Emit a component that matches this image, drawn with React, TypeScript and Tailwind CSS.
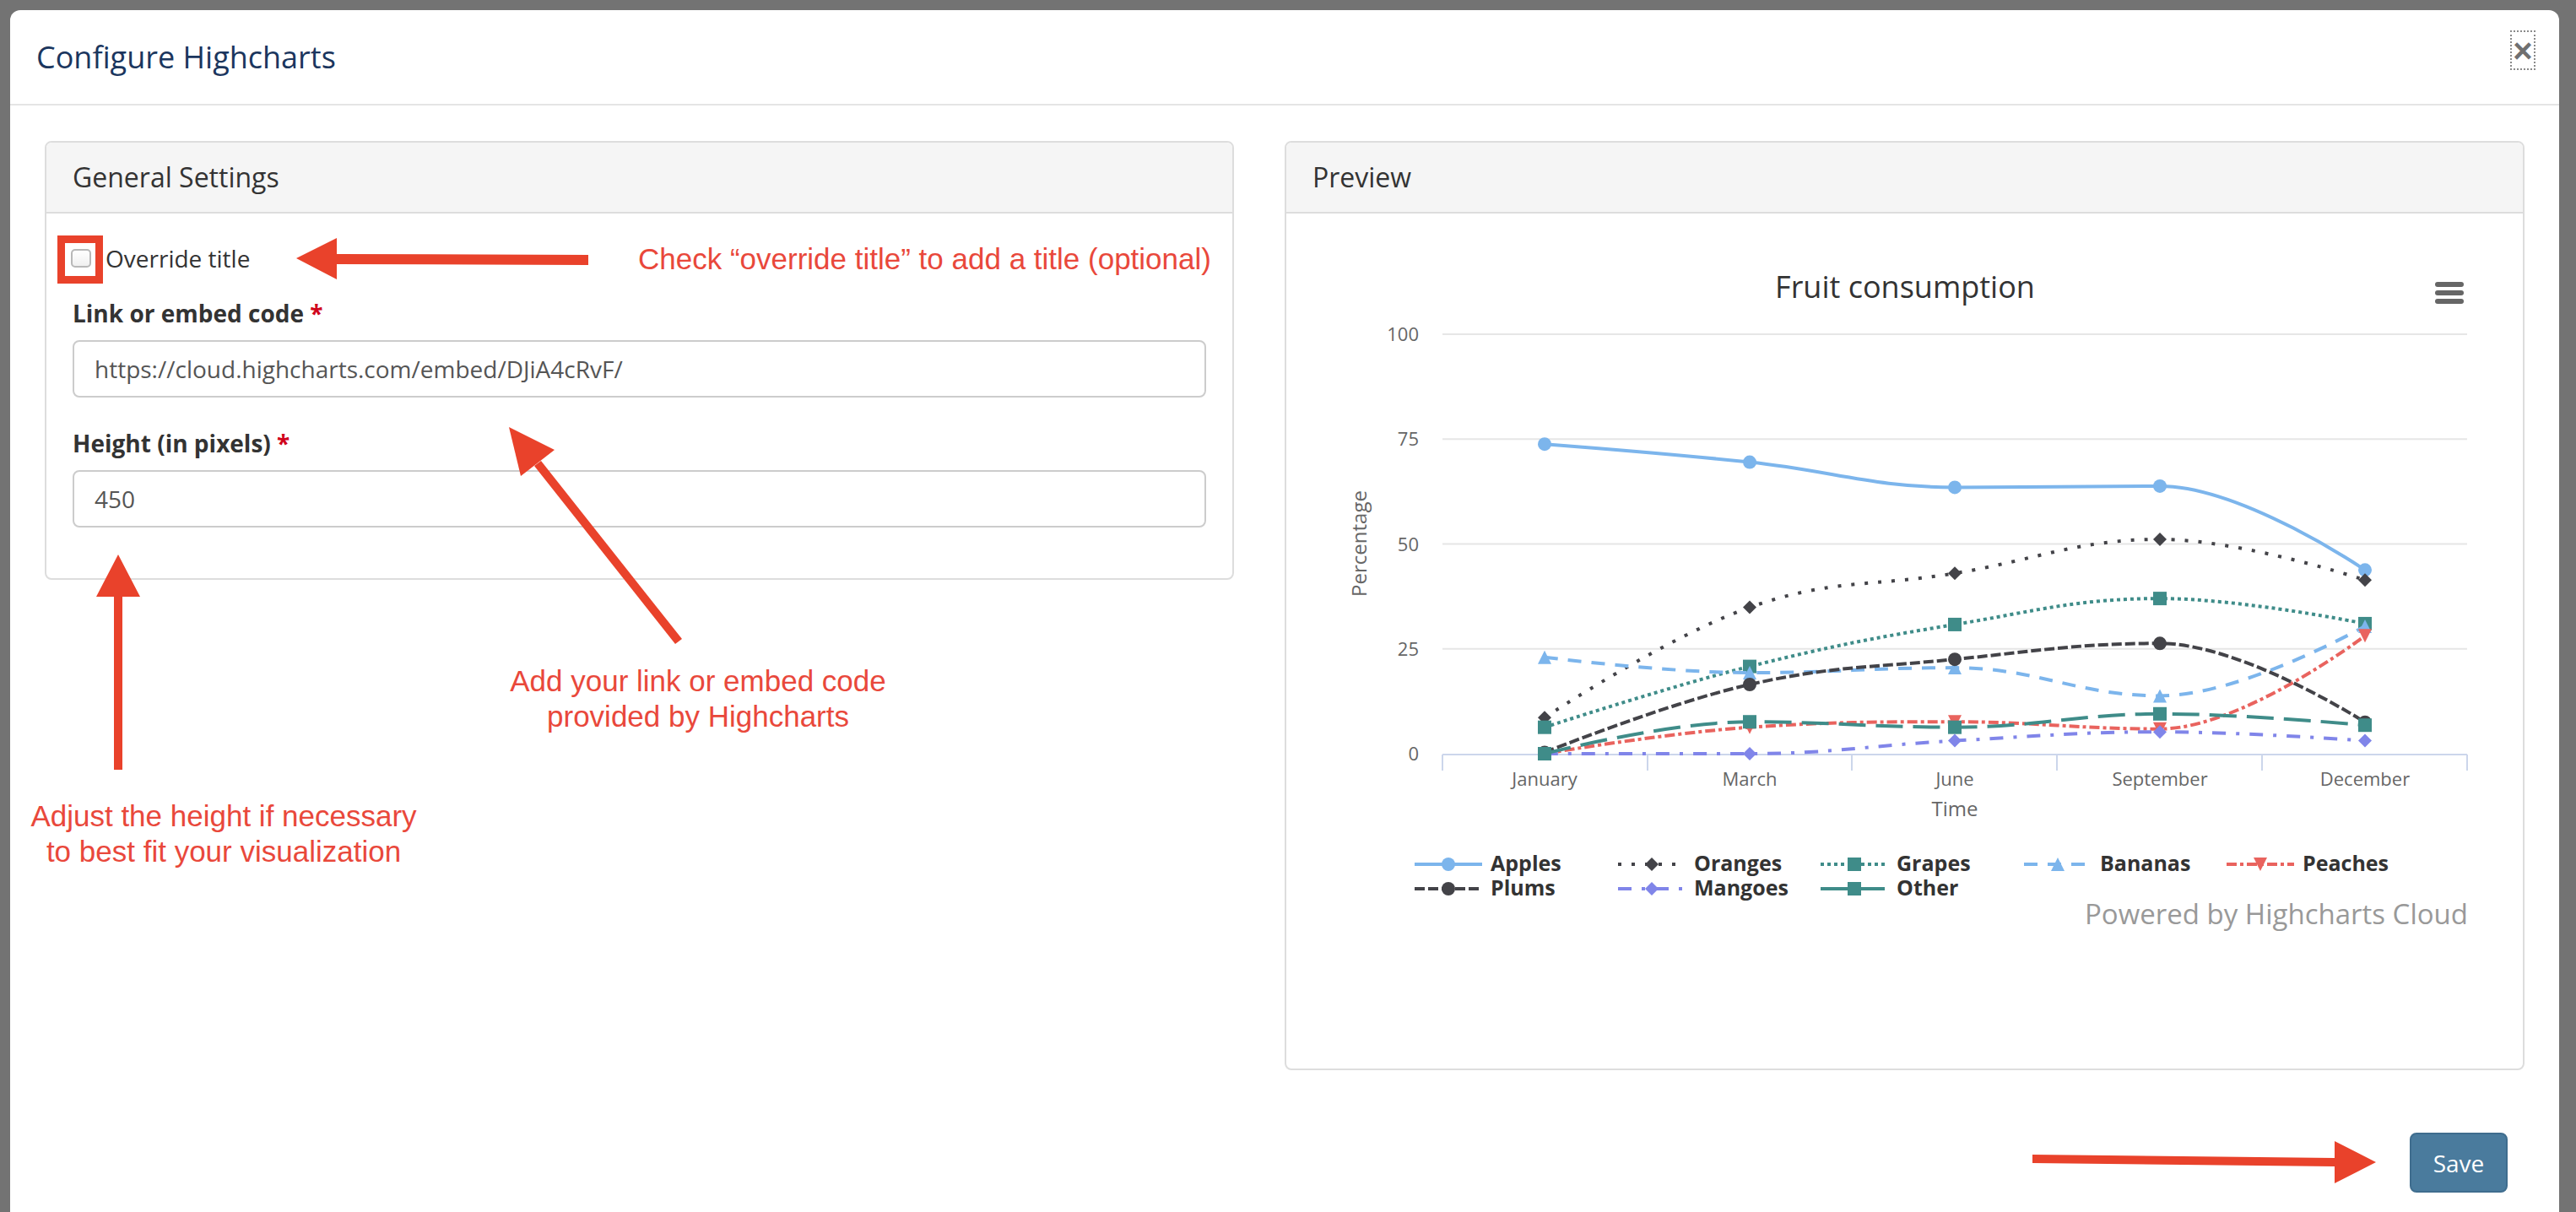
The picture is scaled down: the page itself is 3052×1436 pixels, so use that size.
import React from "react";

type Pt = { x: number; y: number };
type MarkerType = "circle" | "diamond" | "square" | "triangle" | "triangle-down";
type Series = { name: string; color: string; dash?: string; marker: MarkerType; data: number[] };

const series: Series[] = [
  { name: "Apples", color: "#7cb5ec", marker: "circle", data: [73.8, 69.5, 63.5, 63.8, 43.8] },
  { name: "Oranges", color: "#434348", dash: "4 12", marker: "diamond", data: [8.6, 34.9, 43, 51.1, 41.4] },
  { name: "Grapes", color: "#3f8c89", dash: "4 4", marker: "square", data: [6.3, 20.8, 30.8, 37, 31] },
  { name: "Bananas", color: "#7cb5ec", dash: "16 12", marker: "triangle", data: [23, 19.3, 20.5, 13.8, 30.4] },
  { name: "Peaches", color: "#e9635e", dash: "12 4 4 4", marker: "triangle-down", data: [0, 6.3, 7.6, 5.9, 28.1] },
  { name: "Plums", color: "#434348", dash: "12 4", marker: "circle", data: [0.3, 16.5, 22.5, 26.3, 7.5] },
  { name: "Mangoes", color: "#8085e9", dash: "16 12 4 12", marker: "diamond", data: [0, 0, 3.1, 5.2, 3.1] },
  { name: "Other", color: "#3f8c89", dash: "32 12", marker: "square", data: [0, 7.6, 6.3, 9.5, 6.8] },
];

const categories = ["January", "March", "June", "September", "December"];
const catX = [1830, 2073, 2316, 2559, 2802];
const ticks = [1709, 1952, 2194, 2437, 2680, 2923];
const toY = (v: number) => 893 - v * 4.97;

// same smoothing as highcharts' spline series
function splinePath(pts: Pt[]) {
  const s = 1.5;
  const d = 2.5;
  const left: Pt[] = [];
  const right: Pt[] = [];
  pts.forEach((p, i) => {
    const last = pts[i - 1];
    const next = pts[i + 1];
    let lcx = p.x, lcy = p.y, rcx = p.x, rcy = p.y;
    if (last && next) {
      lcx = (s * p.x + last.x) / d;
      lcy = (s * p.y + last.y) / d;
      rcx = (s * p.x + next.x) / d;
      rcy = (s * p.y + next.y) / d;
      let corr = 0;
      if (rcx !== lcx) corr = ((rcy - lcy) * (rcx - p.x)) / (rcx - lcx) + p.y - rcy;
      lcy += corr;
      rcy += corr;
      if (lcy > last.y && lcy > p.y) {
        lcy = Math.max(last.y, p.y);
        rcy = 2 * p.y - lcy;
      } else if (lcy < last.y && lcy < p.y) {
        lcy = Math.min(last.y, p.y);
        rcy = 2 * p.y - lcy;
      }
      if (rcy > next.y && rcy > p.y) {
        rcy = Math.max(next.y, p.y);
        lcy = 2 * p.y - rcy;
      } else if (rcy < next.y && rcy < p.y) {
        rcy = Math.min(next.y, p.y);
        lcy = 2 * p.y - rcy;
      }
    }
    left.push({ x: lcx, y: lcy });
    right.push({ x: rcx, y: rcy });
  });
  let path = `M ${pts[0].x} ${pts[0].y}`;
  for (let i = 1; i < pts.length; i++) {
    path += ` C ${right[i - 1].x} ${right[i - 1].y} ${left[i].x} ${left[i].y} ${pts[i].x} ${pts[i].y}`;
  }
  return path;
}

function Marker({ type, x, y, color }: { type: MarkerType; x: number; y: number; color: string }) {
  const r = 8;
  if (type === "circle") return <circle cx={x} cy={y} r={r} fill={color} />;
  if (type === "square") return <rect x={x - r} y={y - r} width={2 * r} height={2 * r} fill={color} />;
  const pts =
    type === "diamond"
      ? `${x},${y - r} ${x + r},${y} ${x},${y + r} ${x - r},${y}`
      : type === "triangle"
      ? `${x},${y - r} ${x + r},${y + r} ${x - r},${y + r}`
      : `${x - r},${y - r} ${x + r},${y - r} ${x},${y + r}`;
  return <polygon points={pts} fill={color} />;
}

const legendPos = [
  { x: 1676, y: 1024 },
  { x: 1917, y: 1024 },
  { x: 2157, y: 1024 },
  { x: 2398, y: 1024 },
  { x: 2638, y: 1024 },
  { x: 1676, y: 1053 },
  { x: 1917, y: 1053 },
  { x: 2157, y: 1053 },
];

function FruitChart() {
  return (
    <svg width={1465} height={1013} viewBox="1524 253 1465 1013" className="block" fontFamily="'Open Sans', sans-serif">
      <text x={2257} y={353} textAnchor="middle" fontSize={36} fill="#333333">
        Fruit consumption
      </text>
      <g stroke="#666666" strokeWidth={6} strokeLinecap="round">
        <line x1={2888} y1={337} x2={2916} y2={337} />
        <line x1={2888} y1={347} x2={2916} y2={347} />
        <line x1={2888} y1={357} x2={2916} y2={357} />
      </g>
      {[100, 75, 50, 25].map((v) => (
        <line key={v} x1={1709} x2={2923} y1={toY(v)} y2={toY(v)} stroke="#e6e6e6" strokeWidth={2} />
      ))}
      {[100, 75, 50, 25, 0].map((v) => (
        <text key={v} x={1681} y={toY(v) + 8} textAnchor="end" fontSize={22} fill="#666666">
          {v}
        </text>
      ))}
      <line x1={1709} x2={2923} y1={894} y2={894} stroke="#ccd6eb" strokeWidth={2} />
      {ticks.map((t) => (
        <line key={t} x1={t} x2={t} y1={894} y2={913} stroke="#ccd6eb" strokeWidth={2} />
      ))}
      {categories.map((c, i) => (
        <text key={c} x={catX[i]} y={931} textAnchor="middle" fontSize={22} fill="#666666">
          {c}
        </text>
      ))}
      <text x={2316} y={967} textAnchor="middle" fontSize={24} fill="#666666">
        Time
      </text>
      <text x={1619} y={644} textAnchor="middle" fontSize={24} fill="#666666" transform="rotate(-90 1619 644)">
        Percentage
      </text>
      {series.map((s) => {
        const pts = s.data.map((v, i) => ({ x: catX[i], y: toY(v) }));
        return (
          <g key={s.name}>
            <path d={splinePath(pts)} fill="none" stroke={s.color} strokeWidth={4} strokeDasharray={s.dash} />
            {pts.map((p, i) => (
              <Marker key={i} type={s.marker} x={p.x} y={p.y} color={s.color} />
            ))}
          </g>
        );
      })}
      {series.map((s, i) => {
        const { x, y } = legendPos[i];
        return (
          <g key={s.name}>
            <line x1={x} x2={x + 80} y1={y} y2={y} stroke={s.color} strokeWidth={4} strokeDasharray={s.dash} />
            <Marker type={s.marker} x={x + 40} y={y} color={s.color} />
            <text x={x + 90} y={y + 8} fontSize={25} fontWeight={700} fill="#333333">
              {s.name}
            </text>
          </g>
        );
      })}
      <text x={2924} y={1095} textAnchor="end" fontSize={33} fill="#999999">
        Powered by Highcharts Cloud
      </text>
    </svg>
  );
}

function Panel({ title, width, children }: { title: string; width: string; children: React.ReactNode }) {
  return (
    <div className={`${width} rounded-[8px] border-2 border-[#dddddd] bg-white overflow-hidden`}>
      <div className="h-[84px] flex items-center px-[31px] bg-[#f5f5f5] border-b-2 border-[#dddddd]">
        <span className="text-[32px] leading-none text-[#333333]">{title}</span>
      </div>
      {children}
    </div>
  );
}

function Field({ label, value }: { label: string; value: string }) {
  return (
    <div className="flex flex-col">
      <label className="text-[28px] leading-[40px] font-bold text-[#333333]">
        {label} <span className="text-[#d0021b]">*</span>
      </label>
      <input
        readOnly
        defaultValue={value}
        className="mt-[12px] h-[68px] w-full rounded-[8px] border-2 border-[#cccccc] px-[24px] text-[28px] text-[#555555] outline-none"
      />
    </div>
  );
}

const noteText = "absolute text-[35px] leading-[42px] text-[#e9483b] font-['Liberation_Sans',Arial,sans-serif] whitespace-nowrap";

export default function App() {
  return (
    <div className="relative h-[1436px] w-[3052px] overflow-hidden bg-[#737373] pt-[12px] pl-[12px] font-['Open_Sans',sans-serif]">
      <div className="w-[3020px] h-[1500px] rounded-t-[12px] bg-white">
        <div className="h-[113px] flex justify-between border-b-2 border-[#e5e5e5] pl-[31px] pr-[28px]">
          <h4 className="self-center text-[36px] leading-none text-[#1b365e]">Configure Highcharts</h4>
          <button className="mt-[24px] w-[30px] h-[47px] border-2 border-dotted border-[#8a8a8a] flex items-center justify-center text-[40px] leading-none font-bold text-[#707070] font-['Liberation_Sans',Arial,sans-serif]">
            ×
          </button>
        </div>

        <div className="pt-[42px] px-[41px]">
          <div className="flex items-start gap-[60px]">
            <Panel title="General Settings" width="w-[1409px]">
              <div className="px-[31px] pt-[33px] pb-[60px]">
                <div className="flex items-center h-[40px] gap-[17px] -ml-[2px]">
                  <span className="w-[24px] h-[22px] rounded-[5px] border-2 border-[#b8b8b8] bg-gradient-to-b from-white to-[#f0f0f0]" />
                  <span className="text-[28px] text-[#333333]">Override title</span>
                </div>
                <div className="mt-[25px]">
                  <Field label="Link or embed code" value="https://cloud.highcharts.com/embed/DJiA4cRvF/" />
                </div>
                <div className="mt-[34px]">
                  <Field label="Height (in pixels)" value="450" />
                </div>
              </div>
            </Panel>
            <Panel title="Preview" width="w-[1469px]">
              <FruitChart />
            </Panel>
          </div>
          <div className="mt-[74px] flex justify-end pr-[20px]">
            <button className="w-[116px] h-[71px] rounded-[8px] border-2 border-[#3f6d8e] bg-[#4a7b9d] text-[28px] text-white">
              Save
            </button>
          </div>
        </div>
      </div>

      {/* annotation layer */}
      <svg className="absolute left-0 top-0 pointer-events-none" width={3052} height={1436}>
        <g fill="#e9422b">
          <rect x={72.5} y={283.5} width={45} height={48} fill="none" stroke="#e9422b" strokeWidth={9} />
          <polygon points="351,306 399,282 399,301 697,302 697,314 399,313 399,331" />
          <polygon points="808,757 641,546 633,552 800,763" />
          <polygon points="603,506 657,533 617,564" />
          <polygon points="140,657 166,707 145,707 145,912 135,912 135,707 114,707" />
          <polygon points="2408,1368 2766,1372 2766,1352 2815,1377 2766,1402 2766,1382 2408,1378" />
        </g>
      </svg>
      <div className={`${noteText} left-[756px] top-[286px]`}>Check “override title” to add a title (optional)</div>
      <div className={`${noteText} left-[527px] w-[600px] top-[786px] text-center`}>
        Add your link or embed code
        <br />
        provided by Highcharts
      </div>
      <div className={`${noteText} left-[15px] w-[500px] top-[946px] text-center`}>
        Adjust the height if necessary
        <br />
        to best fit your visualization
      </div>
    </div>
  );
}
